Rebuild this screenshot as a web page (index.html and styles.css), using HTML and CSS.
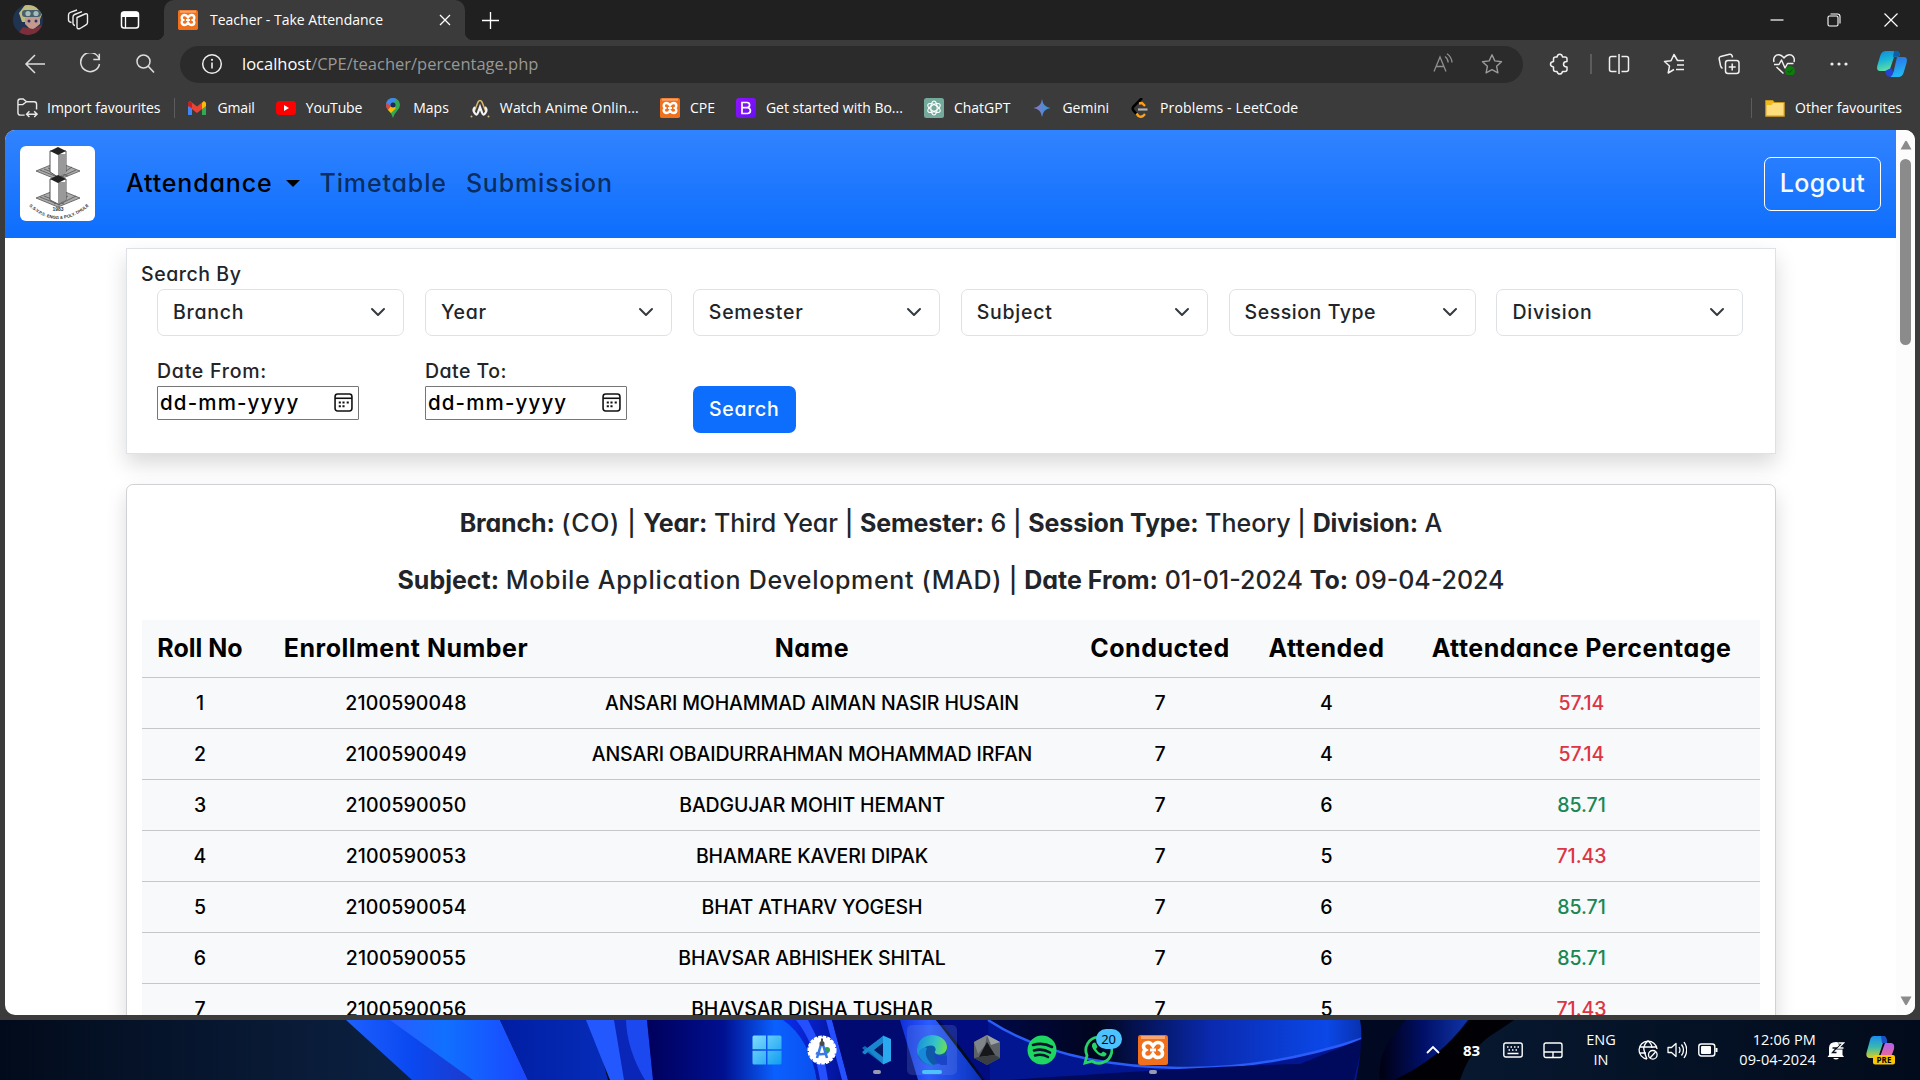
FILE: index.html
```html
<!DOCTYPE html>
<html lang="en">
<head>
<meta charset="utf-8">
<title>Teacher - Take Attendance</title>
<link rel="stylesheet" href="styles.css">
</head>
<body>
<svg class="defs" width="0" height="0">
  <defs>
    <linearGradient id="cop1" x1="0" y1="0" x2="0.3" y2="1"><stop offset="0" stop-color="#1188d8"/><stop offset=".5" stop-color="#1ab4d8"/><stop offset="1" stop-color="#5fe0a0"/></linearGradient>
    <linearGradient id="cop2" x1="0" y1="0" x2="0.2" y2="1"><stop offset="0" stop-color="#2a6fe8"/><stop offset="1" stop-color="#22b8f4"/></linearGradient>
    <linearGradient id="pre1" x1="0" y1="0" x2="0" y2="1"><stop offset="0" stop-color="#1a8cf0"/><stop offset=".5" stop-color="#38b8b0"/><stop offset="1" stop-color="#d8d020"/></linearGradient>
    <linearGradient id="pre2" x1="0" y1="0" x2="0" y2="1"><stop offset="0" stop-color="#b060f0"/><stop offset="1" stop-color="#f06890"/></linearGradient>
    <linearGradient id="win" x1="0" y1="0" x2="1" y2="1"><stop offset="0" stop-color="#7fdcff"/><stop offset="1" stop-color="#109cf0"/></linearGradient>
    <linearGradient id="edge1" x1="0" y1="0.3" x2="1" y2="0.5"><stop offset="0" stop-color="#1a8fdc"/><stop offset=".6" stop-color="#35c4c8"/><stop offset="1" stop-color="#6ee04a"/></linearGradient>
    <linearGradient id="gem" x1="0" y1="0" x2="1" y2="0"><stop offset="0" stop-color="#9a72c4"/><stop offset="1" stop-color="#1f9be0"/></linearGradient>
    <linearGradient id="boot" x1="0" y1="0" x2="1" y2="1"><stop offset="0" stop-color="#9013fe"/><stop offset="1" stop-color="#6610f2"/></linearGradient>
    <symbol id="xampp" viewBox="0 0 30 30">
      <rect width="30" height="30" rx="2.5" fill="#f0701c"/><rect x="3" y="1" width="24" height="3" fill="#f9a570"/>
      <path d="M10 7.5c3 0 4 2 5 3.500c1-1.500 2-3.500 5-3.500s4.500 2 4.500 4-1.200 3-2 3.500c.8.500 2 1.500 2 3.500s-1.500 4-4.500 4-4-2-5-3.500c-1 1.500-2 3.500-5 3.500s-4.500-2-4.500-4 1.200-3 2-3.500c-.8-.5-2-1.500-2-3.500s1.500-4 4.500-4z" fill="none" stroke="#fff" stroke-width="3.600"/>
      <path d="M12 15h6" stroke="#fff" stroke-width="3"/>
    </symbol>
    <symbol id="chev" viewBox="0 0 16 16"><path d="m2 5 6 6 6-6" fill="none" stroke="#343a40" stroke-width="2" stroke-linecap="round" stroke-linejoin="round"/></symbol>
    <symbol id="cal" viewBox="0 0 18 18"><rect x="1" y="1" width="16" height="16" rx="2.500" fill="none" stroke="#111" stroke-width="1.500"/><path d="M1 5h16" stroke="#111" stroke-width="1.500"/><path d="M8 9h2M12 9h2M4.500 12.500h2M8 12.500h2M4.500 9h2" stroke="#111" stroke-width="2"/></symbol>
  </defs>
</svg>

<header class="titlebar">
  <svg class="avatar" viewBox="0 0 30 30"><defs><clipPath id="av"><circle cx="15" cy="15" r="15"/></clipPath></defs><g clip-path="url(#av)"><rect width="30" height="30" fill="#1e3450"/><path d="M6 8 12 0h10l7 9-3 8H9z" fill="#c0bb80"/><rect x="9" y="5" width="19" height="7" rx="3" fill="#48606c"/><circle cx="15" cy="8.500" r="2.600" fill="#a9bcbc"/><circle cx="23" cy="8.500" r="2.600" fill="#a9bcbc"/><path d="M12 12h15v7l-6 5h-4l-5-5z" fill="#c39a8e"/><circle cx="16" cy="16" r="1.500" fill="#336"/><circle cx="23" cy="16" r="1.500" fill="#336"/><path d="M4 30l6-8 10 2 9-4v10z" fill="#7c2f3a"/></g></svg>
  <svg class="ico workspaces" viewBox="0 0 22 22"><g fill="none" stroke="#eee" stroke-width="1.400" stroke-linejoin="round"><path d="m10 8.500 8-3.500q2.500-.8 2.500 1.500v7q0 1.500-1.500 2.300L13 19.500q-3 1-3-1.500z"/><path d="M8 16.500q-2-.3-2-2V8q0-1.800 1.600-2.500L15 2.600"/><path d="M4.500 13.500Q1.500 13 1.500 11V6q0-2 1.800-2.600L10 1"/></g></svg>
  <svg class="ico vtabs" viewBox="0 0 20 20"><rect x="1.500" y="2" width="17" height="16" rx="2.500" fill="none" stroke="#fff" stroke-width="1.500"/><path d="M1.500 7V4q0-2.500 2.500-2.500h12q2.500 0 2.500 2.500v3z" fill="#fff"/><path d="M5.500 7v11" stroke="#fff" stroke-width="1.300"/></svg>
  <div class="tab">
    <svg class="favicon"><use href="#xampp"/></svg>
    <span class="tab-title">Teacher - Take Attendance</span>
    <svg class="tab-close" viewBox="0 0 12 12"><path d="m1 1 10 10M11 1 1 11" stroke="#fff" stroke-width="1.300"/></svg>
  </div>
  <svg class="newtab" viewBox="0 0 18 18"><path d="M9 0v18M0 9h18" stroke="#fff" stroke-width="1.400"/></svg>
  <div class="window-buttons">
    <svg viewBox="0 0 14 14"><path d="M.5 7h13" stroke="#fff" stroke-width="1.200"/></svg>
    <svg viewBox="0 0 14 14"><rect x="1" y="3" width="10" height="10" rx="1.500" fill="none" stroke="#fff" stroke-width="1.100"/><path d="M3.500 1h7Q13 1 13 3.500v7" fill="none" stroke="#fff" stroke-width="1.100"/></svg>
    <svg viewBox="0 0 14 14"><path d="m.5.5 13 13m0-13-13 13" stroke="#fff" stroke-width="1.200"/></svg>
  </div>
</header>

<div class="toolbar">
  <svg class="nav-ico" viewBox="0 0 22 22"><path d="M21 11H2M11 2l-9 9 9 9" fill="none" stroke="#ddd" stroke-width="1.500"/></svg>
  <svg class="nav-ico" viewBox="0 0 22 22"><path d="M20 5.500A9.500 9.500 0 1 0 20.500 11M20.300.8v5.700h-6" fill="none" stroke="#ddd" stroke-width="1.500"/></svg>
  <svg class="nav-ico" viewBox="0 0 22 22"><circle cx="9.500" cy="8.500" r="6.500" fill="none" stroke="#ddd" stroke-width="1.500"/><path d="m14 13 6 6.500" stroke="#ddd" stroke-width="1.600"/></svg>
  <div class="address">
    <svg class="info" viewBox="0 0 22 22"><circle cx="11" cy="11" r="9.300" fill="none" stroke="#eee" stroke-width="1.500"/><path d="M11 9.500v6" stroke="#eee" stroke-width="1.600"/><circle cx="11" cy="6.800" r="1.100" fill="#eee"/></svg>
    <span class="url">localhost<span class="path">/CPE/teacher/percentage.php</span></span>
    <svg class="read" viewBox="0 0 22 22"><path d="M2 18.500 8 4l6 14.500M4.200 13.500h7.600M13 3.500q3 2 3.200 6M15 .8q4.500 3 5 8.700" fill="none" stroke="#8e8e8e" stroke-width="1.300"/></svg>
    <svg class="star" viewBox="0 0 22 22"><path d="m11 1.800 2.800 6.100 6.700.8-4.900 4.600 1.300 6.600L11 16.700l-5.900 3.200 1.300-6.600L1.500 8.700l6.700-.8z" fill="none" stroke="#9a9a9a" stroke-width="1.400" stroke-linejoin="round"/></svg>
  </div>
  <div class="tools">
    <svg class="t-puzzle" viewBox="0 0 22 22"><path d="M6.500 4H8q.5-2.800 2.800-2.800T13.500 4H16q2 0 2 2v2.500q-3.500 0-3.500 2.700T18 14v2.500q0 2-2 2h-2.500q-.5 2.500-2.700 2.500T8 18.500H6.500q-2 0-2-2V14Q1.500 13.500 1.500 11.200T4.500 8.500V6q0-2 2-2z" fill="none" stroke="#f0f0f0" stroke-width="1.500" stroke-linejoin="round"/></svg>
    <i class="tool-sep"></i>
    <svg viewBox="0 0 22 22"><path d="M8.500 3.500h-5q-2 0-2 2v11q0 2 2 2h5M13.500 3.500h5q2 0 2 2v11q0 2-2 2h-5M11 1v20" fill="none" stroke="#f0f0f0" stroke-width="1.500"/></svg>
    <svg viewBox="0 0 22 22"><path d="M21 7.500h-6.500L11 1.500 8 7.800l-6.500.7 5 4.500L5.200 20 11 16.500M14 12h7M13 16.500h8" fill="none" stroke="#f0f0f0" stroke-width="1.500" stroke-linejoin="round"/></svg>
    <svg viewBox="0 0 22 22"><rect x="7.500" y="7.500" width="13.500" height="13" rx="2.500" fill="none" stroke="#f0f0f0" stroke-width="1.500"/><path d="M14.200 10.500v7M10.700 14h7M4.500 15.500Q3 14.500 2.500 12.500L1.200 6q-.4-2 1.600-2.600L11.500 1.300q2-.3 2.600 1.500L14.500 4.500" fill="none" stroke="#f0f0f0" stroke-width="1.500"/></svg>
    <svg viewBox="0 0 22 22"><path d="M1 9C-.3 4 3 1.500 5.800 1.700 9 2 10 4 11 5c1-1 2-3 5.200-3.300C19 1.500 22.300 4 21 9M1 11.500h5L8.500 7l3.500 8 2.500-4.500h6M3.500 14l7 6.500" fill="none" stroke="#f0f0f0" stroke-width="1.500" stroke-linejoin="round"/><circle cx="17" cy="18" r="5" fill="#0f7b0f"/><path d="m14.800 18 1.500 1.500 3-3" fill="none" stroke="#064a06" stroke-width="1"/></svg>
    <svg viewBox="0 0 22 22"><circle cx="4" cy="11" r="1.600" fill="#eee"/><circle cx="11" cy="11" r="1.600" fill="#eee"/><circle cx="18" cy="11" r="1.600" fill="#eee"/></svg>
    <svg class="copilot" viewBox="0 0 30 28"><path d="M9 1h11q2 0 3 5l-6 1-4 12q-1 2-3.500 2H3q-4 0-2.500-6l3-10Q5 1 9 1z" fill="url(#cop1)"/><path d="M17 1h3q2 0 3 5l-7 1z" fill="#0b5fa8"/><path d="M8 21l6-3 3 5-3 4q-5 0-6-6z" fill="#2444d8"/><path d="M20 7h7q4 0 2.500 6l-3 10q-1.500 4-5 4h-8q2-1 3-5z" fill="url(#cop2)"/></svg>
  </div>
</div>

<nav class="bookmarks">
  <a class="bm import"><svg viewBox="0 0 22 22"><path d="M8 19H3.500Q1 19 1 16.500v-12Q1 2 3.500 2h3L10 5h8q2.500 0 2.500 2.500V13M1 8h5l4-3M10 18h10M13 15l-3 3 3 3M18 15l3 3-3 3" fill="none" stroke="#e8e8e8" stroke-width="1.500"/></svg><span>Import favourites</span></a>
  <i class="bm-sep"></i>
  <a class="bm snug"><svg viewBox="0 0 20 20"><path d="M1 5v12h4V9z" fill="#4285f4"/><path d="M19 5v12h-4V9z" fill="#34a853"/><path d="M1 5v3l9 7 9-7V5l-2-2-7 5.500L3 3z" fill="#ea4335"/><path d="M15 5l2-2 2 2v3l-4 3z" fill="#fbbc04"/><path d="M1 5l2-2 2 2v5L1 8z" fill="#c5221f"/></svg><span>Gmail</span></a>
  <a class="bm snug"><svg viewBox="0 0 20 20"><rect y="3" width="20" height="14" rx="3.500" fill="#f00"/><path d="M8 7v6l5-3z" fill="#fff"/></svg><span>YouTube</span></a>
  <a class="bm"><svg viewBox="0 0 20 20"><path d="M3 7a7 7 0 0 1 14 0q0 3-3 6t-4 7q-1-4-4-7T3 7z" fill="#34a853"/><path d="M3 7a7 7 0 0 1 11-5.700L5 11Q3 9 3 7z" fill="#4285f4"/><path d="M3.300 5 8 8l-3 4Q2.500 9 3.300 5z" fill="#ea4335"/><path d="m5 12 4-5 4 3-5 5z" fill="#fbbc04"/><circle cx="10" cy="7" r="2.500" fill="#222c50"/></svg><span>Maps</span></a>
  <a class="bm loose"><svg viewBox="0 0 20 20"><path d="M4 14 8 4q2-3 4 0l4 10" fill="none" stroke="#d9b66c" stroke-width="1.600"/><path d="M5 9q-3 3 0 6.500 2 2.500 3-1L10 9l2 5.500q1 3.500 3 1 3-3.500 0-6.500" fill="none" stroke="#f4f4f4" stroke-width="2.200"/><circle cx="1.500" cy="18.500" r="1" fill="#d9b66c"/><circle cx="18.500" cy="18.500" r="1" fill="#d9b66c"/></svg><span>Watch Anime Onlin...</span></a>
  <a class="bm"><svg><use href="#xampp"/></svg><span>CPE</span></a>
  <a class="bm"><svg viewBox="0 0 20 20"><rect width="20" height="20" rx="3" fill="url(#boot)"/><path d="M6 4.500h5a2.600 2.600 0 0 1 0 5.200H6zM6 9.700h5.500a2.900 2.900 0 0 1 0 5.800H6z" fill="none" stroke="#fff" stroke-width="1.700"/></svg><span>Get started with Bo...</span></a>
  <a class="bm chat"><svg viewBox="0 0 20 20"><rect width="20" height="20" rx="2.500" fill="#74aa9c"/><g fill="none" stroke="#fff" stroke-width="1.100"><ellipse cx="10" cy="10" rx="3.200" ry="7"/><ellipse cx="10" cy="10" rx="3.200" ry="7" transform="rotate(60 10 10)"/><ellipse cx="10" cy="10" rx="3.200" ry="7" transform="rotate(120 10 10)"/></g></svg><span>ChatGPT</span></a>
  <a class="bm"><svg viewBox="0 0 20 20"><path d="M10 1q1 8 8.500 9Q11 11 10 19 9 11 1.500 10 9 9 10 1z" fill="url(#gem)"/></svg><span>Gemini</span></a>
  <a class="bm loose"><svg viewBox="0 0 20 20"><path d="m12 0-8.500 8.500Q2 10.500 3.500 12.500L6.500 16" fill="none" stroke="#000" stroke-width="2.600"/><path d="m9 5.500 3-.5 3 3M6.500 15.500l2 2.500q2.500 1.500 4.500 0l2-2" fill="none" stroke="#ffa116" stroke-width="2.400"/><path d="M8 11.500h9.500" stroke="#b3b3b3" stroke-width="2.200"/></svg><span>Problems - LeetCode</span></a>
  <i class="bm-sep other-sep"></i>
  <a class="bm other"><svg viewBox="0 0 20 20"><path d="M.8 2.500h6.500l2 2h9.900v13.700H.8z" fill="#ffdd7c" stroke="#c8971c" stroke-width="1.200" stroke-linejoin="round"/><path d="M1.200 3h6l1 1.500L6.500 7H1.200z" fill="#f0b818"/></svg><span>Other favourites</span></a>
</nav>

<main class="viewport">
  <div class="page">
    <nav class="navbar">
      <svg class="logo" viewBox="0 0 75 75">
        <g stroke="#555" stroke-width=".8"><path d="m16 25 22-9 22 9-22 9z" fill="#aaa"/><path d="m16 52 22-9 22 9-22 9z" fill="#aaa"/><path d="m20 24 20 8m-16-9 20 8m-16-9 20 8m4-9L34 33m22-9L36 33M20 51l20 8m-16-9 20 8m4-8-14 8m22-8-18 9" fill="none"/></g>
        <path d="M30 5v21l8 5 8-5V5z" fill="#fff" stroke="#555"/><path d="M38 8h8v19l-8 4z" fill="#999"/><path d="m30 5 8-4 8 4-8 4z" fill="#222"/>
        <path d="M30 33v21l8 4 8-4V33z" fill="#fff" stroke="#555"/><path d="M38 36h8v18l-8 4z" fill="#999"/><path d="m30 33 8-4 8 4-8 4z" fill="#222"/>
        <path id="arc" d="M9 60 Q38 86 69 60" fill="none"/>
        <text font-size="5" x="32.500" y="65" class="logo-text">1983</text>
        <text font-size="4.300" class="logo-text"><textPath href="#arc">S.S.V.P.S. ENGG &amp; POLY. DHULE</textPath></text>
      </svg>
      <a class="nav-link active">Attendance</a><i class="caret"></i>
      <a class="nav-link">Timetable</a>
      <a class="nav-link">Submission</a>
      <button class="logout">Logout</button>
    </nav>

    <section class="filters">
      <div class="filters-title">Search By</div>
      <div class="filter-grid">
        <div class="select"><span>Branch</span><svg><use href="#chev"/></svg></div>
        <div class="select"><span>Year</span><svg><use href="#chev"/></svg></div>
        <div class="select"><span>Semester</span><svg><use href="#chev"/></svg></div>
        <div class="select"><span>Subject</span><svg><use href="#chev"/></svg></div>
        <div class="select long"><span>Session Type</span><svg><use href="#chev"/></svg></div>
        <div class="select"><span>Division</span><svg><use href="#chev"/></svg></div>
        <div class="field"><label>Date From:</label><div class="date"><span>dd-mm-yyyy</span><svg><use href="#cal"/></svg></div></div>
        <div class="field to"><label>Date To:</label><div class="date"><span>dd-mm-yyyy</span><svg><use href="#cal"/></svg></div></div>
        <div class="field action"><button class="search">Search</button></div>
      </div>
    </section>

    <section class="report">
      <p class="summary"><b>Branch:</b> <span class="open">(CO) |</span> <b>Year:</b> Third Year | <b>Semester:</b> 6 | <b>Session Type:</b> Theory | <b>Division:</b> A</p>
      <p class="summary period"><b>Subject:</b> <span class="open">Mobile Application Development (MAD)</span> | <b>Date From:</b> 01-01-2024 <b>To:</b> 09-04-2024</p>
      <table class="attendance">
        <colgroup><col class="c-roll"><col class="c-enr"><col class="c-name"><col class="c-con"><col class="c-att"><col class="c-pct"></colgroup>
        <thead><tr><th class="h-roll">Roll No</th><th>Enrollment Number</th><th>Name</th><th>Conducted</th><th>Attended</th><th>Attendance Percentage</th></tr></thead>
        <tbody>
          <tr><td>1</td><td class="num">2100590048</td><td class="name">ANSARI MOHAMMAD AIMAN NASIR HUSAIN</td><td>7</td><td>4</td><td class="low">57.14</td></tr>
          <tr><td>2</td><td class="num">2100590049</td><td class="name">ANSARI OBAIDURRAHMAN MOHAMMAD IRFAN</td><td>7</td><td>4</td><td class="low">57.14</td></tr>
          <tr><td>3</td><td class="num">2100590050</td><td class="name">BADGUJAR MOHIT HEMANT</td><td>7</td><td>6</td><td class="ok">85.71</td></tr>
          <tr><td>4</td><td class="num">2100590053</td><td class="name">BHAMARE KAVERI DIPAK</td><td>7</td><td>5</td><td class="low">71.43</td></tr>
          <tr><td>5</td><td class="num">2100590054</td><td class="name">BHAT ATHARV YOGESH</td><td>7</td><td>6</td><td class="ok">85.71</td></tr>
          <tr><td>6</td><td class="num">2100590055</td><td class="name">BHAVSAR ABHISHEK SHITAL</td><td>7</td><td>6</td><td class="ok">85.71</td></tr>
          <tr><td>7</td><td class="num">2100590056</td><td class="name">BHAVSAR DISHA TUSHAR</td><td>7</td><td>5</td><td class="low">71.43</td></tr>
        </tbody>
      </table>
    </section>
  </div>
  <aside class="scrollbar">
    <svg viewBox="0 0 12 10"><path d="M.5 9.500 5 1.500q1-1.500 2 0l4.500 8z" fill="#8b8b8b"/></svg>
    <i class="thumb"></i>
    <svg viewBox="0 0 12 10"><path d="M.5.5h11L7 8.500q-1 1.500-2 0z" fill="#8b8b8b"/></svg>
  </aside>
</main>

<footer class="taskbar">
  <svg class="wallpaper" viewBox="0 0 1920 60" preserveAspectRatio="none">
    <defs>
      <linearGradient id="w0"><stop offset="0" stop-color="#020b1b"/><stop offset="1" stop-color="#0c2244"/></linearGradient>
      <linearGradient id="w1"><stop offset="0" stop-color="#1d60ff"/><stop offset=".5" stop-color="#0a48f0"/><stop offset="1" stop-color="#2038c8"/></linearGradient>
      <linearGradient id="w2"><stop offset="0" stop-color="#2a5cff"/><stop offset=".4" stop-color="#1070ff"/><stop offset="1" stop-color="#1b46ff"/></linearGradient>
      <linearGradient id="w3"><stop offset="0" stop-color="#001ea4"/><stop offset="1" stop-color="#062cb8"/></linearGradient>
      <linearGradient id="w4"><stop offset="0" stop-color="#00005c"/><stop offset=".45" stop-color="#001090"/><stop offset=".75" stop-color="#0a60ff"/><stop offset="1" stop-color="#0a50f0"/></linearGradient>
      <linearGradient id="w5"><stop offset="0" stop-color="#0a2cf0"/><stop offset="1" stop-color="#000a78"/></linearGradient>
      <linearGradient id="w6"><stop offset="0" stop-color="#1030d8"/><stop offset=".35" stop-color="#2b5cff"/><stop offset="1" stop-color="#0830b8"/></linearGradient>
      <linearGradient id="w7"><stop offset="0" stop-color="#000a5c"/><stop offset=".35" stop-color="#00051e"/><stop offset=".6" stop-color="#0a2ab0"/><stop offset=".85" stop-color="#0b48e8"/><stop offset="1" stop-color="#061a78"/></linearGradient>
      <linearGradient id="w8"><stop offset="0" stop-color="#000010"/><stop offset=".5" stop-color="#001068"/><stop offset="1" stop-color="#1034a8"/></linearGradient>
      <linearGradient id="w9"><stop offset="0" stop-color="#07182f"/><stop offset="1" stop-color="#020b1b"/></linearGradient>
    </defs>
    <path d="M0 0h430v60H0z" fill="url(#w0)"/>
    <path d="M346 0h60l74 60h-68z" fill="url(#w1)"/>
    <path d="M390 0h110l28 60h-55z" fill="url(#w2)"/>
    <path d="M500 0h92l16 60h-80z" fill="url(#w3)"/>
    <path d="M586 0h30l10 60h-16z" fill="#2458ff"/>
    <path d="M614 0h36l4 60h-30z" fill="#0a26b8"/>
    <path d="M626 0h21l6 60h-8q-18-30-19-60z" fill="#1c48f0"/>
    <path d="M647 0h140q24 20 30 60H653z" fill="url(#w4)"/>
    <path d="M783 0h60l20 60h-46q-8-42-34-60z" fill="url(#w5)"/>
    <path d="M796 0h12q16 28 20 60h-8q-6-38-24-60zM826 0h6l16 60h-6z" fill="#2450ff"/>
    <path d="M832 0h70l18 60h-72z" fill="#000a70"/>
    <path d="M900 0h36l46 60h-64z" fill="url(#w6)"/>
    <path d="M936 0h460v60H982Q968 30 936 0z" fill="url(#w7)"/>
    <path d="M940 0h48q70 46 190 48v12H985z" fill="#000c80"/>
    <path d="M988 0q70 46 190 48 90 2 186-30l-8 42H990z" fill="#021692"/>
    <path d="M988 0q70 46 190 48 90 2 186-30" fill="none" stroke="#2a5cf8" stroke-width="2.500"/>
    <path d="M1010 60q200-14 290-16l64-26-10 42z" fill="#000a5c"/>
    <path d="M1356 60q8-40 4-60h110l-60 60z" fill="#000822"/>
    <path d="M1380 60q-4-30 26-60h62q-30 40-72 60z" fill="url(#w8)"/>
    <path d="M1394 60q44-20 76-60h60l-50 60z" fill="#000005"/>
    <path d="M1460 60q10-30 30-44 14-9 24-16h406v60z" fill="url(#w9)"/>
  </svg>
  <div class="apps">
    <div class="app"><svg viewBox="0 0 30 30"><path d="M2 .5h12v13.800H.5V2Q.5.500 2 .5zM15.500.5H28q1.500 0 1.500 1.500v12.300h-14zM.5 15.700H14v13.800H2Q.5 29.500.5 28zM15.500 15.700h14V28q0 1.500-1.500 1.500H15.500z" fill="url(#win)"/></svg></div>
    <div class="app"><svg viewBox="0 0 30 30"><circle cx="15" cy="15" r="13.300" fill="#fff" stroke="#fff" stroke-width="2.500" stroke-dasharray="3.500 1"/><circle cx="20" cy="15" r="3" fill="#35a04c"/><path d="M14.500 8 10 23M15.500 8 20 23M9 18q6 3 12-1" fill="none" stroke="#3a78e8" stroke-width="2.600"/><circle cx="15" cy="8.500" r="2.500" fill="#4a4a4a"/><path d="M15 3.500v3" stroke="#4a4a4a" stroke-width="2"/></svg></div>
    <div class="app running"><svg viewBox="0 0 30 30"><path d="M21 1 7 14 3 11 .5 12.500v1L21 29z" fill="#0a6db8"/><path d="M21 29 7 16l-4 3.500L.5 18v-1.500L21 1z" fill="#1a86d0"/><path d="M21 .5 29 4v22l-8 3.500z" fill="#2aa8f0"/><path d="M21 8v14l-9-7z" fill="#021c66"/></svg></div>
    <div class="app active"><svg viewBox="0 0 30 30"><circle cx="15" cy="15" r="15" fill="#0f5aa8"/><path d="M0 14C1 5 7 0 15 0c9 0 15 6 15 12 0 5-4 7.500-8 7.500-3 0-5-1.500-4-3 1.500-2 .5-6-4-6-8 0-11 8-6 15C2 23-.5 18.500 0 14z" fill="url(#edge1)"/><path d="M10 13q-4 9 6 17-8 .5-13-7-3-6 1-9 3-2.500 6-1z" fill="#1888d8"/><path d="M17.500 17q1 5 10.500 4l2-1v10h-6Q16 26 17.500 17z" fill="#1a45c8"/></svg></div>
    <div class="app"><svg viewBox="0 0 30 30"><path d="m15 0 13 7v16l-13 7L2 23V7z" fill="#5d6266"/><path d="m15 0 13 7-9 3z" fill="#9da2a5"/><path d="M2 7 15 0l-2 10-7 9z" fill="#7f8589"/><path d="m15 7 8 13-16 2z" fill="#15171a"/><path d="m2 23 5-1 16-2 5 3-13 7z" fill="#3a3e42"/></svg></div>
    <div class="app"><svg viewBox="0 0 30 30"><circle cx="15" cy="15" r="14.500" fill="#1ed760"/><path d="M6 10q10-3 19 2M7 15.500q8.500-2.500 16 2M8 20.500q7-2 13 1.500" fill="none" stroke="#08142e" stroke-width="2.600" stroke-linecap="round"/></svg></div>
    <div class="app"><svg viewBox="0 0 30 30"><path d="m2 28 2-7.500A13 13 0 1 1 9 26.200z" fill="none" stroke="#25d366" stroke-width="2.800"/><path d="M10 8q-3 3 2 8.500t9.500 5q3-2 1.500-3.500l-3-1.500-2 2q-3-1-5-4.500l1.500-2L13 8.500Q12 7 10 8z" fill="#25d366"/></svg><span class="badge">20</span></div>
    <div class="app running"><svg><use href="#xampp"/></svg></div>
  </div>
  <div class="tray">
    <svg class="up" viewBox="0 0 14 14"><path d="m1 10 6-6 6 6" fill="none" stroke="#fff" stroke-width="1.800"/></svg>
    <b class="temp">83</b>
    <svg class="kb" viewBox="0 0 20 20"><rect x=".8" y="3" width="18.400" height="14" rx="2" fill="none" stroke="#fff" stroke-width="1.400"/><path d="M4 7h1.500M7.500 7H9M11 7h1.500M14.500 7H16M5.500 10H7M9 10h1.500M12.500 10H14M4.500 13.500h11" stroke="#fff" stroke-width="1.500"/></svg>
    <svg class="pad" viewBox="0 0 20 20"><rect x="1" y="3" width="18" height="14.500" rx="2" fill="none" stroke="#fff" stroke-width="1.400"/><path d="M1 12h18M10 12v5" stroke="#fff" stroke-width="1.400"/></svg>
    <div class="lang"><span>ENG</span><span>IN</span></div>
    <svg class="net" viewBox="0 0 20 20"><g fill="none" stroke="#fff" stroke-width="1.300"><path d="M9 19A9 9 0 1 1 19 9M10 1Q5 5 6 10t3 9M10 1q4 3 4 7M1.500 7h17M2 13h6"/><circle cx="14.800" cy="14.800" r="4.300"/><path d="m12 18 5.500-6"/></g></svg>
    <svg class="vol" viewBox="0 0 20 20"><path d="M1 7.500h3.500L9 3.500v13l-4.500-4H1zM12 7q2 3 0 6M14.500 4.500q4 5.500 0 11M17 2q5.500 8 0 16" fill="none" stroke="#fff" stroke-width="1.300" stroke-linejoin="round"/></svg>
    <svg class="bat" viewBox="0 0 20 20"><rect x=".8" y="4" width="16" height="12" rx="2.500" fill="none" stroke="#fff" stroke-width="1.400"/><rect x="3" y="6" width="10" height="8" rx="1" fill="#fff"/><path d="M18.500 8v4" stroke="#fff" stroke-width="2"/></svg>
    <div class="clock"><span>12:06 PM</span><span>09-04-2024</span></div>
    <svg class="bell" viewBox="0 0 18 20"><path d="M2 15V8q0-6 7-6 6.500 0 6.500 6v7l1.500 2H.5zM6 18h6q-3 3-6 0z" fill="#fff"/><path d="M5.500 8h4l-4 4.500h4" fill="none" stroke="#06101f" stroke-width="1.300"/><path d="M11.500 3h5l-5 5h5" fill="none" stroke="#06101f" stroke-width="3"/><path d="M11.500 3h5l-5 5h5" fill="none" stroke="#fff" stroke-width="1.300"/></svg>
    <svg class="pre" viewBox="0 0 30 30"><path d="M8 1h9q3 0 4 6l-4 1-4 12q-1 3-4 3H3q-4-1-2-7L4 5q1-4 4-4z" fill="url(#pre1)"/><path d="M15 1h3q3 0 3 7l-5 0z" fill="#1a50c8"/><path d="M19 8h6q4 0 3 6l-3 8H14z" fill="url(#pre2)"/><rect x="7" y="20" width="22" height="9.500" rx="2" fill="#fdc500"/><text x="18" y="27.600" text-anchor="middle" class="pre-text">PRE</text></svg>
  </div>
</footer>
</body>
</html>
```
FILE: styles.css
```css
* { box-sizing: border-box; }
body { margin: 0; width: 1920px; height: 1080px; overflow: hidden; display: flex; flex-direction: column; background: #3b3b3b; color: #fff; font-family: "Open Sans", "Noto Sans", sans-serif; font-size: 14px; }
svg { display: block; flex: none; }
.defs { position: absolute; width: 0; height: 0; }
span, b, .nav-link { white-space: nowrap; }

/* Browser chrome */
.titlebar { height: 40px; flex: none; background: #202020; display: flex; align-items: center; padding-left: 13px; }
.avatar { width: 30px; height: 30px; }
.workspaces { width: 22px; height: 22px; margin-left: 24px; }
.vtabs { width: 20px; height: 20px; margin-left: 31px; }
.tab { width: 301px; height: 40px; margin-left: 24px; background: #3b3b3b; border-radius: 10px 10px 0 0; display: flex; align-items: center; padding: 0 14px 1px; position: relative; }
.tab::before, .tab::after { content: ""; position: absolute; bottom: 0; width: 8px; height: 8px; }
.tab::before { left: -8px; background: radial-gradient(circle at 0 0, #202020 8px, #3b3b3b 8.5px); }
.tab::after { right: -8px; background: radial-gradient(circle at 100% 0, #202020 8px, #3b3b3b 8.5px); }
.favicon { width: 20px; height: 20px; }
.tab-title { margin-left: 12px; font-size: 14px; }
.tab-close { width: 12px; height: 12px; margin-left: auto; }
.newtab { width: 17px; height: 17px; margin-left: 17px; }
.window-buttons { margin-left: auto; display: flex; gap: 43px; padding-right: 22px; }
.window-buttons svg { width: 14px; height: 14px; }

.toolbar { height: 48px; flex: none; display: flex; align-items: center; padding-left: 24px; }
.nav-ico { width: 22px; height: 22px; margin-right: 33px; }
.address { width: 1343px; height: 37px; margin-left: -9px; background: #2b2b2b; border-radius: 19px; display: flex; align-items: center; padding-left: 21px; padding-right: 20px; }
.info { width: 22px; height: 22px; }
.url { margin-left: 19px; padding-bottom: 2px; font-size: 16.5px; }
.path { color: #989898; }
.read { width: 22px; height: 22px; margin-left: auto; }
.star { width: 22px; height: 22px; margin-left: 27px; }
.tools { display: flex; align-items: center; gap: 33px; margin-left: 26px; }
.tools svg { width: 22px; height: 22px; }
.tools .t-puzzle { margin-right: -14px; }
.tool-sep { width: 2px; height: 20px; background: #5c5c5c; margin-right: -17px; }
.tools .copilot { width: 30px; height: 28px; margin-left: -6px; }

.bookmarks { height: 42px; flex: none; display: flex; align-items: center; padding: 0 18px 3px 17px; }
.bm { display: flex; align-items: center; gap: 10px; margin-right: 21px; }
.bm svg { width: 20px; height: 20px; }
.snug { letter-spacing: -.15px; }
.loose { letter-spacing: .14px; }
.chat { margin-right: 22px; }
.import { margin-right: 14px; gap: 9px; }
.import svg { width: 21px; height: 21px; }
.bm-sep { width: 1px; height: 20px; background: #5c5c5c; margin-right: 12px; }
.other-sep { margin-left: auto; margin-right: 13px; }
.other { margin-right: 0; }

/* Page */
.viewport { height: 885px; flex: none; margin: 0 5px; border-radius: 10px; overflow: hidden; background: #fff; display: flex; font-family: Inter, "Open Sans", sans-serif; font-feature-settings: "cv11"; font-size: 19.5px; font-weight: 450; color: #212529; }
.page { width: 1891px; height: 885px; overflow: hidden; display: flex; flex-direction: column; }
.navbar { height: 108px; flex: none; background: linear-gradient(#3183ff, #0d6efd); display: flex; align-items: center; padding: 0 15px 2px; font-size: 25px; font-weight: 500; letter-spacing: .85px; }
.logo { width: 75px; height: 75px; margin-right: 31px; background: #fff; border-radius: 6px; }
.logo-text { fill: #333; font-family: "Liberation Sans", sans-serif; font-weight: bold; letter-spacing: 0; }
.nav-link { color: rgba(0, 0, 0, .65); margin-right: 19px; }
.nav-link.active { color: #000; margin-right: 13px; }
.caret { border: 7px solid transparent; border-top-color: #000; border-bottom: 0; margin-right: 20px; }
.logout { margin: 2px 0 0 auto; width: 117px; height: 54px; border: 1px solid #fff; border-radius: 7px; background: transparent; color: #f8f9fa; font: inherit; letter-spacing: .35px; padding: 0 0 2px; display: flex; align-items: center; justify-content: center; font-feature-settings: inherit; }

.filters { flex: none; width: 1650px; height: 206px; margin: 10px 0 0 121px; padding: 11px 30px 0; border: 1px solid #dee2e6; box-shadow: 0 10px 20px rgba(0, 0, 0, .15); background: #fff; font-weight: 500; letter-spacing: .75px; position: relative; }
.filters-title { height: 29px; line-height: 29px; margin-left: -16px; letter-spacing: .55px; }
.filter-grid { display: grid; grid-template-columns: repeat(6, 247px); column-gap: 20.9px; row-gap: 20px; }
.select { height: 47px; border: 1px solid #dee2e6; border-radius: 7px; display: flex; align-items: center; justify-content: space-between; padding: 0 17px 1px 15px; }
.select svg { width: 16px; height: 16px; }
.long { letter-spacing: .55px; }
.field label { display: block; height: 30px; line-height: 31px; }
.to label { letter-spacing: .5px; }
.date { width: 202px; height: 34px; border: 1px solid #767676; border-radius: 1px; display: flex; align-items: center; justify-content: space-between; padding: 0 5px 1px 2px; color: #000; font-size: 20.5px; letter-spacing: 1.15px; }
.date svg { width: 19px; height: 19px; }
.action { padding-top: 30px; }
.search { width: 103px; height: 47px; border: 0; border-radius: 7px; background: #0d6efd; color: #fff; font: inherit; font-feature-settings: inherit; letter-spacing: .7px; padding: 0 0 2px; display: flex; align-items: center; justify-content: center; }

.report { flex: none; width: 1650px; height: 800px; margin: 30px 0 0 121px; padding: 10px 15px 0; border: 1px solid #cfd1d4; border-radius: 7px; box-shadow: 0 10px 20px rgba(0, 0, 0, .15); background: #fff; }
.summary { margin: 0; height: 57px; line-height: 57px; font-size: 25px; text-align: center; white-space: nowrap; }
.summary b { letter-spacing: -.15px; }
.summary.period b { letter-spacing: 0; }
.open { letter-spacing: .68px; }
.attendance { width: 1618px; table-layout: fixed; border-collapse: collapse; margin-top: 11px; background: #f8f9fa; color: #000; text-align: center; }
.c-roll { width: 116px; }
.c-enr { width: 296px; }
.c-name { width: 516px; }
.c-con { width: 180px; }
.c-att { width: 153px; }
.c-pct { width: 357px; }
.attendance th, .attendance td { padding: 0; border-bottom: 1px solid #c6c7c8; height: 51px; }
.attendance th { height: 57px; font-size: 25px; font-weight: 700; letter-spacing: .5px; }
.attendance .h-roll { letter-spacing: 0; }
.attendance .num { letter-spacing: .16px; }
.attendance .name { letter-spacing: -.12px; }
.attendance .low { color: #dc3545; }
.attendance .ok { color: #198754; }

.scrollbar { width: 19px; background: #fcfcfc; display: flex; flex-direction: column; align-items: center; padding: 10px 0 9px; }
.scrollbar svg { width: 12px; height: 10px; }
.thumb { width: 11px; height: 186px; margin: 9px 0 auto; border-radius: 6px; background: #8b8b8b; }

/* Desktop taskbar */
.taskbar { height: 60px; margin-top: 5px; flex: none; position: relative; display: flex; background: #020b1b; }
.wallpaper { position: absolute; inset: 0; width: 1920px; height: 60px; }
.apps { position: relative; display: flex; align-items: center; gap: 5.2px; margin-left: 741.5px; }
.app { width: 50px; height: 50px; border-radius: 5px; display: flex; align-items: center; justify-content: center; position: relative; }
.app svg { width: 30px; height: 30px; }
.app.active { background: rgba(120, 150, 220, .22); }
.app.running::after, .app.active::after { content: ""; position: absolute; bottom: 1px; left: 21px; width: 8px; height: 4px; border-radius: 2px; background: #9a9aae; }
.app.active::after { left: 15px; width: 20px; background: #4cc2ff; }
.badge { position: absolute; left: 23px; top: 4px; width: 26px; height: 20px; border-radius: 10px; background: #4cc2ff; color: #000; font-size: 13px; line-height: 20px; text-align: center; }
.tray { position: relative; margin-left: auto; display: flex; align-items: center; padding-right: 24px; }
.tray svg { width: 20px; height: 20px; }
.tray .up { width: 14px; height: 14px; margin-right: 23px; }
.temp { width: 18px; margin-right: 22px; font-size: 15px; }
.kb { margin-right: 20px; }
.pad { margin-right: 23px; }
.lang, .clock { display: flex; flex-direction: column; align-items: center; line-height: 20px; font-size: 14.5px; }
.lang { width: 30px; margin-right: 22px; }
.net { margin-right: 9px; }
.vol { margin-right: 11px; }
.bat { margin-right: 20px; }
.clock { width: 78px; align-items: flex-end; margin-right: 11px; letter-spacing: .1px; }
.tray .bell { width: 18px; margin-right: 21px; }
.tray .pre { width: 30px; height: 30px; }
.pre-text { font-size: 8px; font-weight: 700; fill: #000; }
```
